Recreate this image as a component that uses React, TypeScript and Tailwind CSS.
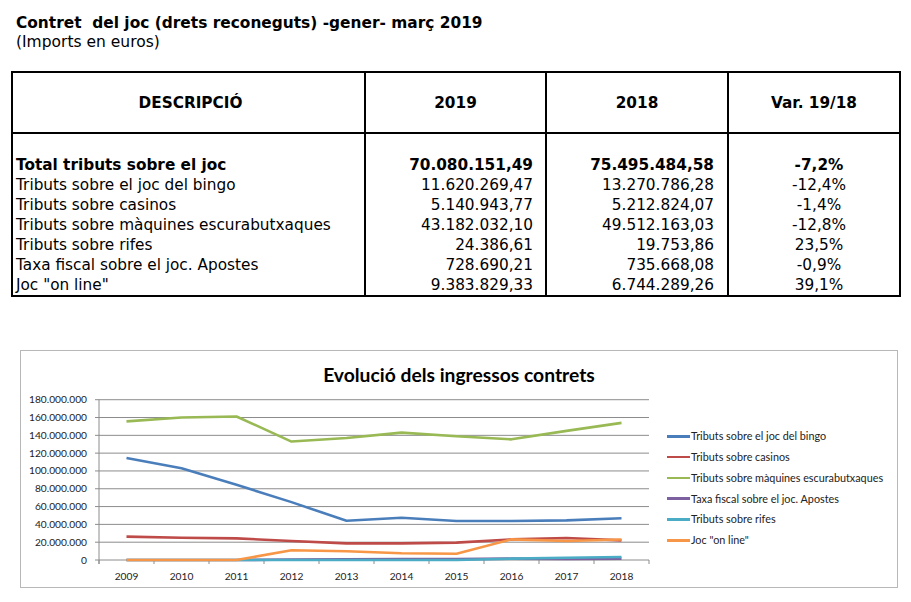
import React from "react";

const rows = [
  { d: "Total tributs sobre el joc", a: "70.080.151,49", b: "75.495.484,58", v: "-7,2%", bold: true },
  { d: "Tributs sobre el joc del bingo", a: "11.620.269,47", b: "13.270.786,28", v: "-12,4%" },
  { d: "Tributs sobre casinos", a: "5.140.943,77", b: "5.212.824,07", v: "-1,4%" },
  { d: "Tributs sobre màquines escurabutxaques", a: "43.182.032,10", b: "49.512.163,03", v: "-12,8%" },
  { d: "Tributs sobre rifes", a: "24.386,61", b: "19.753,86", v: "23,5%" },
  { d: "Taxa fiscal sobre el joc. Apostes", a: "728.690,21", b: "735.668,08", v: "-0,9%" },
  { d: 'Joc "on line"', a: "9.383.829,33", b: "6.744.289,26", v: "39,1%" },
];

const series = [
  { name: "Tributs sobre el joc del bingo", color: "#4A7EBB", data: [114.5, 103, 84.5, 65, 44, 47.5, 43.8, 43.8, 44.5, 46.8] },
  { name: "Tributs sobre casinos", color: "#BE4B48", data: [26.2, 25, 24.3, 21.3, 18.7, 18.7, 19.5, 23.2, 24.7, 22] },
  { name: "Tributs sobre màquines escurabutxaques", color: "#98B954", data: [155.7, 160, 161.2, 133, 137, 143, 139, 135.5, 145, 154] },
  { name: "Taxa fiscal sobre el joc. Apostes", color: "#7D60A0", data: [0, 0, 0, 0.5, 0.8, 1, 1.2, 1.5, 1.2, 1.5] },
  { name: "Tributs sobre rifes", color: "#4BACC6", data: [0, 0, 0, 0, 0, 0, 0, 1.5, 2.5, 3.4] },
  { name: 'Joc "on line"', color: "#F79646", data: [0, 0, 0, 10.9, 9.8, 7.5, 7, 23.2, 21.3, 23] },
];

const years = [2009, 2010, 2011, 2012, 2013, 2014, 2015, 2016, 2017, 2018];
const Y0 = 558;
const step = 17.81;
const X0 = 99;
const cw = 55;
const yOf = (v: number) => Y0 - (v / 20) * step;
const xOf = (i: number) => X0 + cw / 2 + cw * i;

function Chart() {
  const labels = [];
  for (let k = 0; k <= 9; k++) {
    const v = k * 20;
    labels.push(v === 0 ? "0" : `${v}.000.000`);
  }
  return (
    <svg width={640} height={201} viewBox="21 385 640 201" className="block">
      {labels.map((l, k) => (
        <g key={k}>
          <line x1={95} x2={649} y1={yOf(k * 20)} y2={yOf(k * 20)} stroke="#8c8c8c" strokeWidth={1} />
          <text
            x={87}
            y={yOf(k * 20) + 3.5}
            textAnchor="end"
            fontSize={10.2}
            fontFamily="Lato, sans-serif"
            fill="#222"
          >
            {l}
          </text>
        </g>
      ))}
      <line x1={X0} x2={X0} y1={yOf(180)} y2={Y0 + 4} stroke="#8c8c8c" strokeWidth={1} />
      {Array.from({ length: 11 }).map((_, i) => (
        <line key={i} x1={X0 + cw * i} x2={X0 + cw * i} y1={Y0} y2={Y0 + 4} stroke="#8c8c8c" strokeWidth={1} />
      ))}
      {years.map((y, i) => (
        <text
          key={y}
          x={xOf(i)}
          y={577.5}
          textAnchor="middle"
          fontSize={10.2}
          fontFamily="Lato, sans-serif"
          fill="#222"
        >
          {y}
        </text>
      ))}
      {series.map((s) => (
        <polyline
          key={s.name}
          fill="none"
          stroke={s.color}
          strokeWidth={2.6}
          strokeLinejoin="round"
          points={s.data.map((v, i) => `${xOf(i)},${yOf(v)}`).join(" ")}
        />
      ))}
    </svg>
  );
}

export default function App() {
  return (
    <div className="w-[911px] h-[602px] bg-white text-black" style={{ fontFamily: '"DejaVu Sans", Verdana, sans-serif' }}>
      <div className="pl-[16px] pt-[13px]">
        <div className="text-[15.4px] font-bold leading-[20px] whitespace-pre">Contret  del joc (drets reconeguts) -gener- març 2019</div>
        <div className="text-[15.5px] leading-[18px]">(Imports en euros)</div>
      </div>
      <div className="pl-[11px] mt-[20px]">
        <table className="border-collapse border-2 border-black text-[15.3px] leading-[20px]" style={{ tableLayout: "fixed" }}>
          <colgroup>
            <col className="w-[353px]" />
            <col className="w-[181px]" />
            <col className="w-[182px]" />
            <col className="w-[172px]" />
          </colgroup>
          <thead>
            <tr className="h-[61px]">
              <th className="border-2 border-black font-bold text-center pl-[4px]">DESCRIPCIÓ</th>
              <th className="border-2 border-black font-bold text-center">2019</th>
              <th className="border-2 border-black font-bold text-center">2018</th>
              <th className="border-2 border-black font-bold text-center">Var. 19/18</th>
            </tr>
          </thead>
          <tbody>
            <tr className="h-[22px]">
              <td className="border-x-2 border-black"></td>
              <td className="border-x-2 border-black"></td>
              <td className="border-x-2 border-black"></td>
              <td className="border-x-2 border-black"></td>
            </tr>
            {rows.map((r, i) => (
              <tr key={r.d} className={`${i === rows.length - 1 ? "h-[19px]" : "h-[20px]"} ${r.bold ? "font-bold" : ""}`}>
                <td className="border-x-2 border-black pl-[3px] whitespace-nowrap p-0">{r.d}</td>
                <td className="border-x-2 border-black text-right pr-[12px] p-0">{r.a}</td>
                <td className="border-x-2 border-black text-right pr-[13px] p-0">{r.b}</td>
                <td className="border-x-2 border-black text-center pl-[10px] p-0">{r.v}</td>
              </tr>
            ))}
          </tbody>
        </table>
      </div>
      <div className="ml-[20px] mt-[53px] w-[878px] h-[238px] border border-[#b8b8b8] flex flex-col">
        <div
          className="h-[36px] pt-[12px] text-center text-[19.3px] font-bold leading-[24px] text-black"
          style={{ fontFamily: "Lato, sans-serif" }}
        >
          Evolució dels ingressos contrets
        </div>
        <div className="flex">
          <Chart />
          <div className="ml-[6px] pt-[39px] flex flex-col" style={{ fontFamily: "Lato, sans-serif" }}>
            {series.map((s) => (
              <div key={s.name} className="h-[20.8px] flex items-center text-[10.8px] text-[#222]">
                <span className="w-[23px] h-[2.6px] mr-[1px]" style={{ backgroundColor: s.color }}></span>
                <span>{s.name}</span>
              </div>
            ))}
          </div>
        </div>
      </div>
    </div>
  );
}
